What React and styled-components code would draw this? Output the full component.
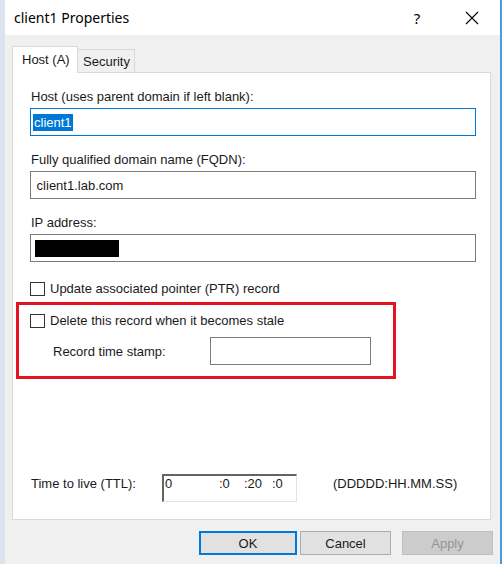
import React from 'react';
import styled, { createGlobalStyle } from 'styled-components';

const Global = createGlobalStyle`
  html, body {
    margin: 0;
    padding: 0;
    background: #fff;
  }
  body {
    font-family: "Liberation Sans", Arial, sans-serif;
    font-size: 13px;
    color: #1a1a1a;
  }
`;

const Screen = styled.div`
  display: flex;
  width: 504px;
  height: 564px;
  overflow: hidden;
`;

const LeftStrip = styled.div`
  width: 5px;
  background: #dbe3ee;
`;

const RightEdge = styled.div`
  width: 2px;
  background: #4f97e0;
  border-right: 2px solid #fff;
`;

const Main = styled.div`
  flex: 1;
  display: flex;
  flex-direction: column;
`;

const TitleBar = styled.div`
  height: 35px;
  background: #fff;
  display: flex;
  align-items: center;
  padding-left: 9px;
`;

const Title = styled.span`
  flex: 1;
  font-family: "Noto Sans", "Open Sans", sans-serif;
  font-size: 14px;
  color: #000;
`;

const Help = styled.span`
  font-family: "Noto Sans", sans-serif;
  font-size: 15px;
  color: #000;
  width: 20px;
  text-align: center;
  margin-right: 38px;
`;

const Close = styled.div`
  width: 14px;
  height: 14px;
  margin-right: 21px;
  display: flex;
`;

const Body = styled.div`
  flex: 1;
  background: #f0f0f0;
  padding: 11px 7px 0 7px;
  display: flex;
  flex-direction: column;
`;

const Tabs = styled.div`
  display: flex;
  align-items: flex-end;
  height: 26px;
  position: relative;
  z-index: 1;
`;

const Tab = styled.div`
  box-sizing: border-box;
  height: ${p => (p.active ? '27px' : '23px')};
  width: ${p => p.w}px;
  margin-bottom: ${p => (p.active ? '-1px' : '0')};
  background: ${p => (p.active ? '#fff' : '#f0f0f0')};
  border: 1px solid #d9d9d9;
  border-bottom: none;
  border-left: ${p => (p.active ? '1px solid #d9d9d9' : 'none')};
  padding: ${p => (p.active ? '5px 0 0 9px' : '4px 0 0 5px')};
`;

const Panel = styled.div`
  box-sizing: border-box;
  height: 448px;
  margin-right: 2px;
  background: #fff;
  border: 1px solid #d9d9d9;
  padding: 16px 14px 17px 17px;
  display: flex;
  flex-direction: column;
`;

const Label = styled.div`
  line-height: 15px;
  padding-left: 1px;
  margin-top: ${p => p.top || 0}px;
`;

const TextBox = styled.div`
  box-sizing: border-box;
  height: 28px;
  margin-top: ${p => (p.flat ? 0 : 4)}px;
  border: 1px solid ${p => (p.focus ? '#0078d7' : '#7a7a7a')};
  background: #fff;
  display: flex;
  align-items: center;
  padding-left: 2px;
  width: ${p => (p.w ? `${p.w}px` : 'auto')};
`;

const Selected = styled.span`
  background: #0078d7;
  color: #fff;
  line-height: 17px;
  padding: 0 1px;
`;

const Redacted = styled.div`
  width: 84px;
  height: 17px;
  margin-left: 2px;
  background: #000;
`;

const CheckRow = styled.div`
  display: flex;
  align-items: center;
  margin-top: ${p => p.top || 0}px;
  line-height: 15px;
`;

const Box = styled.span`
  box-sizing: border-box;
  width: 15px;
  height: 14px;
  border: 1px solid #333;
  background: #fff;
  margin-right: 5px;
`;

const Highlight = styled.div`
  box-sizing: border-box;
  width: 380px;
  height: 77px;
  margin: 6px 0 0 -14px;
  border: 3px solid #e3141f;
  padding: 8px 0 0 11px;
`;

const StampRow = styled.div`
  display: flex;
  align-items: center;
  margin-top: 9px;
  padding-left: 23px;
`;

const StampLabel = styled.span`
  width: 157px;
`;

const TtlRow = styled.div`
  margin-top: auto;
  display: flex;
  align-items: flex-start;
  line-height: 15px;
`;

const TtlLabel = styled.span`
  width: 131px;
  padding-left: 1px;
  margin-top: 2px;
`;

const TtlBox = styled.div`
  box-sizing: border-box;
  width: 135px;
  height: 28px;
  border-top: 2px solid #646464;
  border-left: 2px solid #646464;
  border-right: 1px solid #e3e3e3;
  border-bottom: 1px solid #e3e3e3;
  display: flex;
  padding: 0 0 0 1px;
`;

const Seg = styled.span`
  width: ${p => p.w}px;
`;

const Format = styled.span`
  margin: 2px 0 0 36px;
`;

const Buttons = styled.div`
  display: flex;
  justify-content: flex-end;
  margin-top: 11px;
`;

const Button = styled.button`
  box-sizing: border-box;
  width: ${p => p.w}px;
  height: 24px;
  margin-left: ${p => p.gap}px;
  font-family: "Liberation Sans", Arial, sans-serif;
  font-size: 13px;
  padding: 0;
  background: ${p => (p.disabled ? '#cccccc' : '#e1e1e1')};
  color: ${p => (p.disabled ? '#949494' : '#1a1a1a')};
  border: ${p => (p.primary ? '2px solid #0078d7' : `1px solid ${p.disabled ? '#bfbfbf' : '#adadad'}`)};
`;

const App = () => (
  <>
    <Global />
    <Screen>
      <LeftStrip />
      <Main>
        <TitleBar>
          <Title>client1 Properties</Title>
          <Help>?</Help>
          <Close>
            <svg width="14" height="14" viewBox="0 0 14 14">
              <path d="M1 1 L13 13 M13 1 L1 13" stroke="#000" strokeWidth="1.1" fill="none" />
            </svg>
          </Close>
        </TitleBar>
        <Body>
          <Tabs>
            <Tab active w={66}>Host (A)</Tab>
            <Tab w={57}>Security</Tab>
          </Tabs>
          <Panel>
            <Label>Host (uses parent domain if left blank):</Label>
            <TextBox focus>
              <Selected>client1</Selected>
            </TextBox>
            <Label top={16}>Fully qualified domain name (FQDN):</Label>
            <TextBox>&nbsp;client1.lab.com</TextBox>
            <Label top={16}>IP address:</Label>
            <TextBox>
              <Redacted />
            </TextBox>
            <CheckRow top={19}>
              <Box />
              Update associated pointer (PTR) record
            </CheckRow>
            <Highlight>
              <CheckRow>
                <Box />
                Delete this record when it becomes stale
              </CheckRow>
              <StampRow>
                <StampLabel>Record time stamp:</StampLabel>
                <TextBox flat w={161} />
              </StampRow>
            </Highlight>
            <TtlRow>
              <TtlLabel>Time to live (TTL):</TtlLabel>
              <TtlBox>
                <Seg w={54}>0</Seg>
                <Seg w={25}>:0</Seg>
                <Seg w={28}>:20</Seg>
                <Seg w={20}>:0</Seg>
              </TtlBox>
              <Format>(DDDDD:HH.MM.SS)</Format>
            </TtlRow>
          </Panel>
          <Buttons>
            <Button primary w={98} gap={0}>OK</Button>
            <Button w={91} gap={3}>Cancel</Button>
            <Button disabled w={91} gap={11}>Apply</Button>
          </Buttons>
        </Body>
      </Main>
      <RightEdge />
    </Screen>
  </>
);

export default App;
